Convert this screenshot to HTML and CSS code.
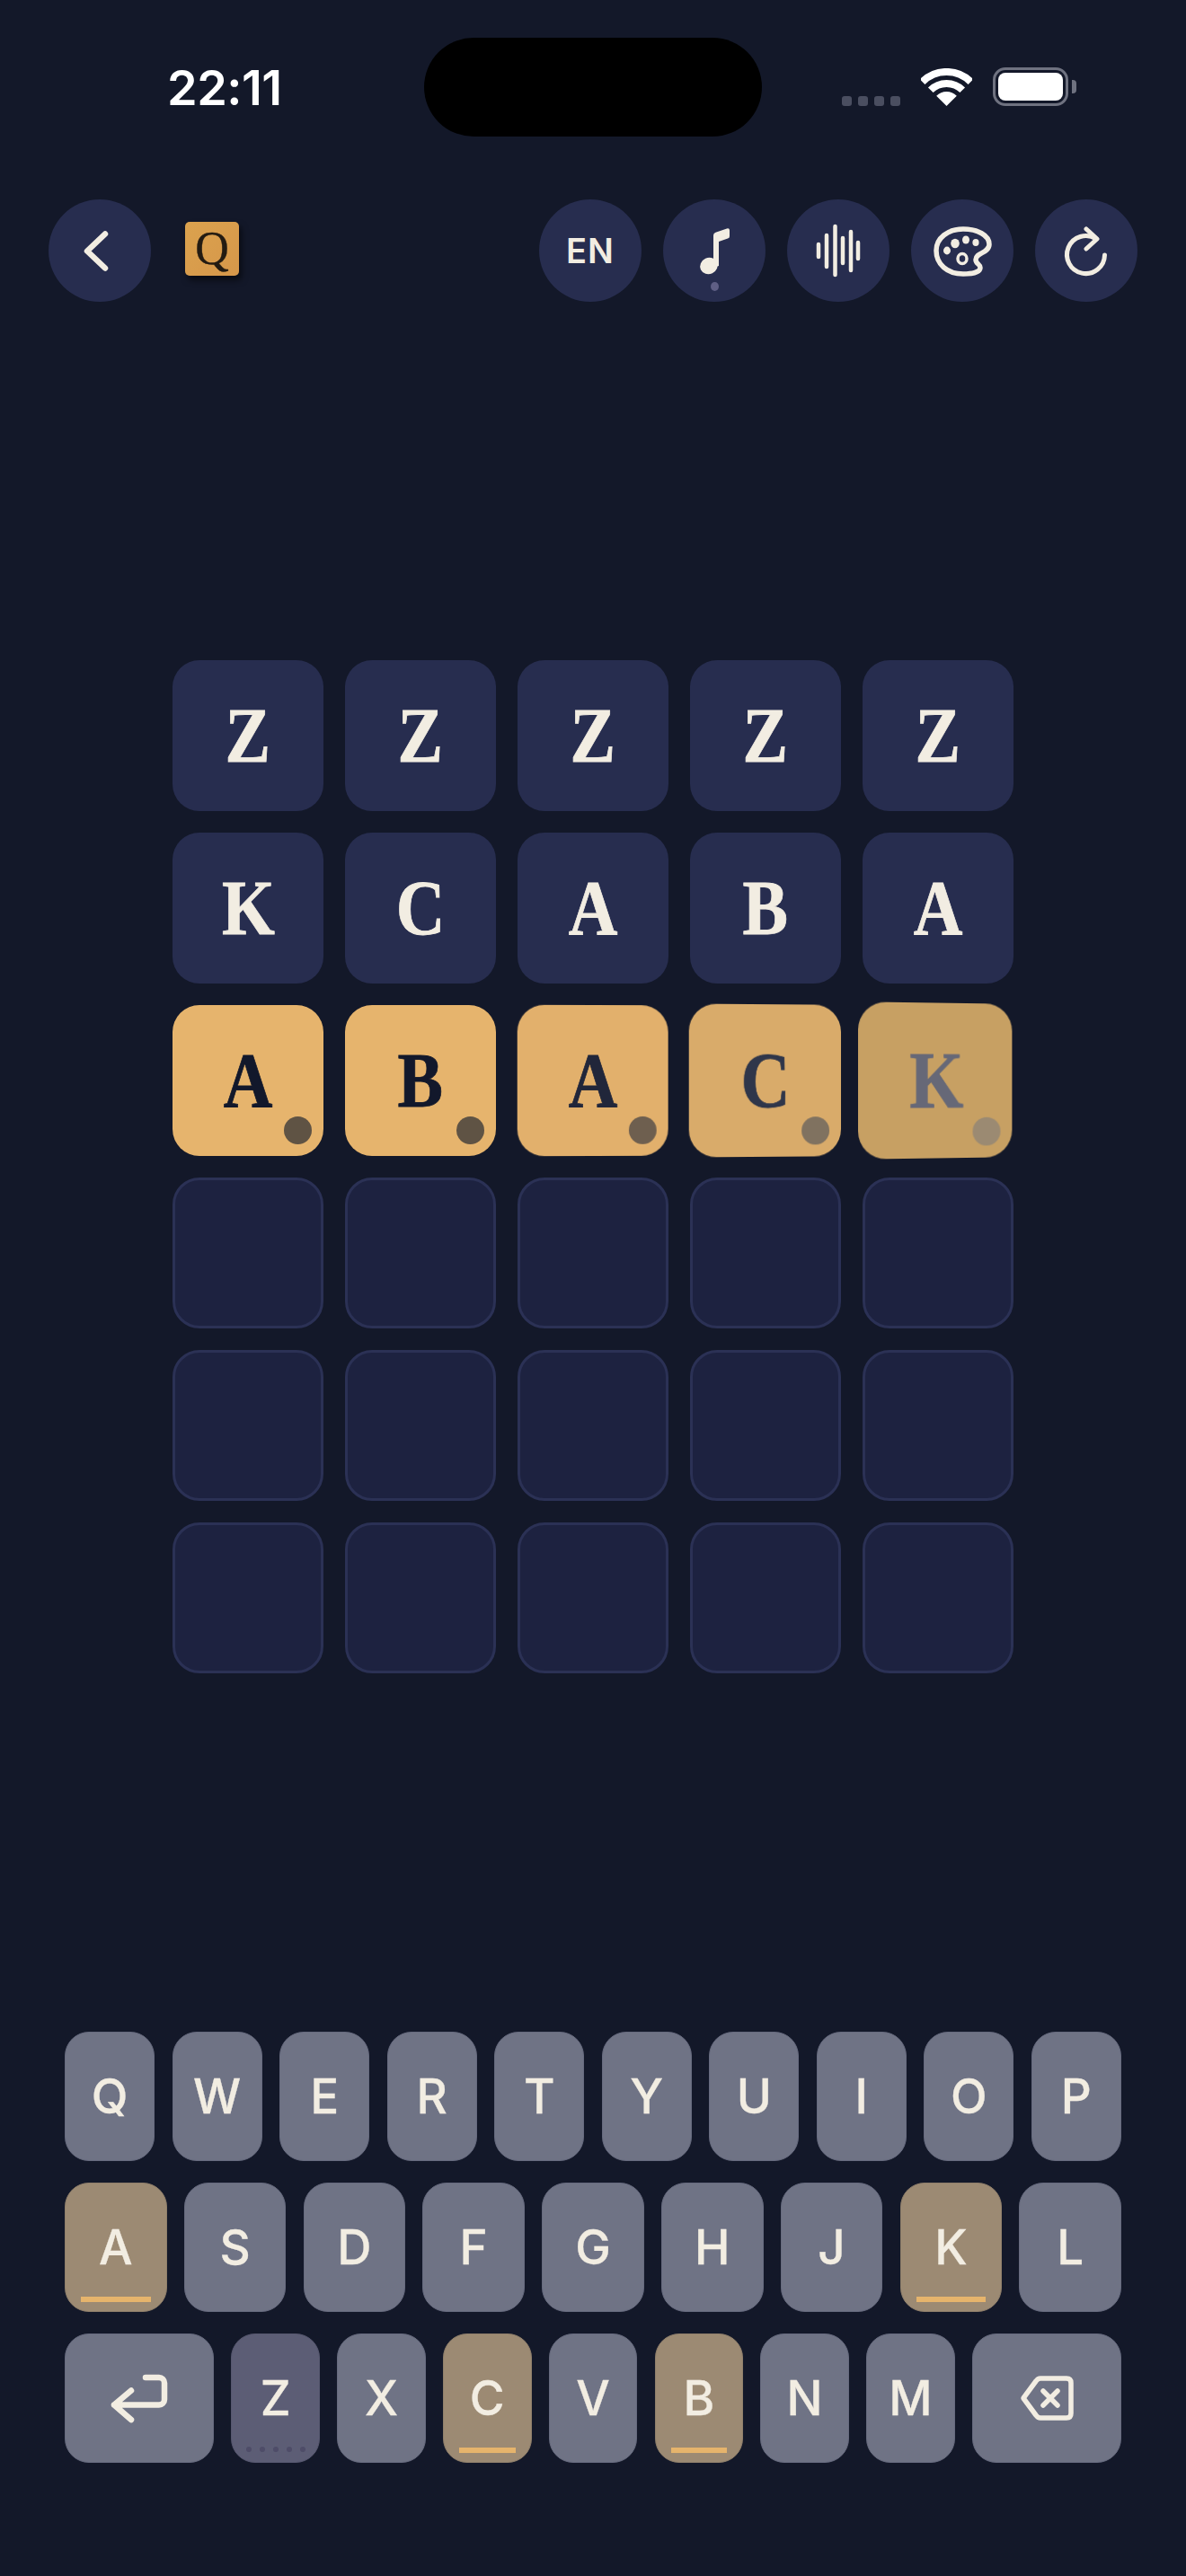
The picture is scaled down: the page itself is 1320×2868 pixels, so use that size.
FILE: index.html
```html
<!DOCTYPE html>
<html lang="en">

<head>
    <meta charset="UTF-8" />
    <meta name="viewport" content="width=device-width, initial-scale=1.0" />
    <title>Word game</title>
    <link rel="stylesheet" href="styles.css">
</head>

<body>
    <div class="status-bar">
        <div class="status-time">22:11</div>
        <div class="island"></div>
        <div class="status-icons">
            <div class="signal"><i></i><i></i><i></i><i></i></div>
            <svg class="wifi" width="57" height="42" viewBox="0 0 57 42">
                <path d="M1.6 15.1A38 38 0 0 1 55.4 15.1M10.8 24.3A25 25 0 0 1 46.2 24.3" fill="none" stroke="#fff" stroke-width="8" />
                <path d="M28.5 42L17.2 30.7A16 16 0 0 1 39.8 30.7Z" fill="#fff" />
            </svg>
            <div class="battery"><div class="battery-fill"></div></div>
            <div class="battery-cap"></div>
        </div>
    </div>

    <div class="toolbar">
        <button class="round-btn">
            <svg width="114" height="114" viewBox="0 0 114 114">
                <path d="M63 38.500L43 57.500L63 76.500" class="icon-line" stroke-width="6.500" />
            </svg>
        </button>
        <div class="mini-tile">Q</div>
        <div class="toolbar-right">
            <button class="round-btn lang-btn">EN</button>
            <button class="round-btn">
                <svg width="114" height="114" viewBox="0 0 114 114">
                    <ellipse cx="51" cy="74" rx="10" ry="9" transform="rotate(-25 51 74)" class="icon-fill" />
                    <path d="M56 76V40q0-2.500 2.500-3.200L71 32.500q3-.8 3 2V41q0 2-2 2.600L62 47V74Z" class="icon-fill" />
                </svg>
                <span class="music-dot"></span>
            </button>
            <button class="round-btn">
                <svg width="114" height="114" viewBox="0 0 114 114">
                    <path d="M35 50V64M44 40V75M53.500 30V84M62 43V71M71 36V79M79 48V66" class="icon-line" stroke-width="4.500" />
                </svg>
            </button>
            <button class="round-btn">
                <svg width="114" height="114" viewBox="0 0 114 114">
                    <path d="M58 33C74 33 87 40 87 50C87 60 72 59 72 67C72 72 77 72 77 76C77 81 68 83 58 83C40 83 28 72 28 57C28 43 41 33 58 33Z" class="icon-line" stroke-width="5.500" />
                    <ellipse cx="49" cy="49" rx="4.800" ry="5.200" class="icon-fill" />
                    <ellipse cx="61" cy="45" rx="4" ry="4.500" class="icon-fill" />
                    <ellipse cx="72" cy="48" rx="3.600" ry="4" class="icon-fill" />
                    <ellipse cx="40" cy="57" rx="4" ry="4.400" class="icon-fill" />
                    <ellipse cx="57" cy="66" rx="5" ry="5.500" class="icon-line" stroke-width="3.500" />
                </svg>
            </button>
            <button class="round-btn">
                <svg width="114" height="114" viewBox="0 0 114 114">
                    <path d="M77.500 62A21 21 0 1 1 68 44" class="icon-line" stroke-width="5" />
                    <path d="M57 33L69 44L57 55" class="icon-line" stroke-width="5" />
                </svg>
            </button>
        </div>
    </div>

    <div class="board">
        <div class="tile tile-used"><span>Z</span></div>
        <div class="tile tile-used"><span>Z</span></div>
        <div class="tile tile-used"><span>Z</span></div>
        <div class="tile tile-used"><span>Z</span></div>
        <div class="tile tile-used"><span>Z</span></div>

        <div class="tile tile-used"><span>K</span></div>
        <div class="tile tile-used"><span>C</span></div>
        <div class="tile tile-used"><span>A</span></div>
        <div class="tile tile-used"><span>B</span></div>
        <div class="tile tile-used"><span>A</span></div>

        <div class="tile tile-gold"><span>A</span><i class="tile-dot"></i></div>
        <div class="tile tile-gold flip-1"><span>B</span><i class="tile-dot"></i></div>
        <div class="tile tile-gold flip-2"><span>A</span><i class="tile-dot"></i></div>
        <div class="tile tile-gold flip-3"><span>C</span><i class="tile-dot"></i></div>
        <div class="tile tile-gold flip-4"><span>K</span><i class="tile-dot"></i></div>

        <div class="tile tile-empty"></div>
        <div class="tile tile-empty"></div>
        <div class="tile tile-empty"></div>
        <div class="tile tile-empty"></div>
        <div class="tile tile-empty"></div>

        <div class="tile tile-empty"></div>
        <div class="tile tile-empty"></div>
        <div class="tile tile-empty"></div>
        <div class="tile tile-empty"></div>
        <div class="tile tile-empty"></div>

        <div class="tile tile-empty"></div>
        <div class="tile tile-empty"></div>
        <div class="tile tile-empty"></div>
        <div class="tile tile-empty"></div>
        <div class="tile tile-empty"></div>
    </div>

    <div class="keyboard">
        <div class="key-row">
            <button class="key">Q</button>
            <button class="key">W</button>
            <button class="key">E</button>
            <button class="key">R</button>
            <button class="key">T</button>
            <button class="key">Y</button>
            <button class="key">U</button>
            <button class="key">I</button>
            <button class="key">O</button>
            <button class="key">P</button>
        </div>
        <div class="key-row">
            <button class="key key-gold">A</button>
            <button class="key">S</button>
            <button class="key">D</button>
            <button class="key">F</button>
            <button class="key">G</button>
            <button class="key">H</button>
            <button class="key">J</button>
            <button class="key key-gold">K</button>
            <button class="key">L</button>
        </div>
        <div class="key-row">
            <button class="key key-wide">
                <svg width="80" height="60" viewBox="0 0 80 60">
                    <path d="M12 37.500H62a6 6 0 0 0 6-6V13a6 6 0 0 0-6-6H47M31 21.500L12 37.500L31 54" class="icon-line" stroke-width="6.500" />
                </svg>
            </button>
            <button class="key key-dim">Z
                <span class="key-dots"><i></i><i></i><i></i><i></i><i></i></span>
            </button>
            <button class="key">X</button>
            <button class="key key-gold">C</button>
            <button class="key">V</button>
            <button class="key key-gold">B</button>
            <button class="key">N</button>
            <button class="key">M</button>
            <button class="key key-wide">
                <svg width="60" height="50" viewBox="0 0 60 50">
                    <path d="M4 25L18 6q2-3 5-3H52q5 0 5 5V42q0 5-5 5H23q-3 0-5-3Z" class="icon-line" stroke-width="5.500" />
                    <path d="M26 17L42 33M42 17L26 33" class="icon-line" stroke-width="5.500" />
                </svg>
            </button>
        </div>
    </div>
</body>

</html>
```

FILE: styles.css
```css
html,
body {
    margin: 0;
    padding: 0;
}

body {
    width: 1320px;
    height: 2868px;
    overflow: hidden;
    background-color: #131829;
    color: #f2ede2;
    font-family: Inter, "Liberation Sans", sans-serif;
}

button {
    margin: 0;
    padding: 0;
    border: none;
    font-family: inherit;
    color: inherit;
}

.icon-line {
    fill: none;
    stroke: #f2ede2;
    stroke-linecap: round;
    stroke-linejoin: round;
}

.icon-fill {
    fill: #f2ede2;
}

/* status bar */
.status-bar {
    display: flex;
    align-items: center;
    height: 110px;
    padding: 42px 0 0 186px;
}

.status-time {
    width: 286px;
    font-size: 54px;
    font-weight: 600;
    letter-spacing: -0.5px;
    color: #fff;
}

.island {
    width: 376px;
    height: 110px;
    border-radius: 55px;
    background-color: #000;
}

.status-icons {
    display: flex;
    align-items: flex-end;
    height: 43px;
    margin-left: 89px;
    margin-top: -1px;
}

.signal {
    display: flex;
    gap: 7px;
    margin-right: 23px;
}

.signal i {
    width: 11px;
    height: 11px;
    border-radius: 3px;
    background-color: #4a4e60;
}

.wifi {
    margin-right: 23px;
}

.battery {
    box-sizing: border-box;
    width: 84px;
    height: 43px;
    padding: 3px;
    border: 3.5px solid #6f7280;
    border-radius: 14px;
}

.battery-fill {
    height: 100%;
    border-radius: 8px;
    background-color: #fff;
}

.battery-cap {
    width: 5px;
    height: 15px;
    margin: 0 0 14px 4px;
    border-radius: 0 4px 4px 0;
    background-color: #6f7280;
}

/* toolbar */
.toolbar {
    display: flex;
    align-items: center;
    height: 114px;
    margin-top: 70px;
    padding: 0 54px;
}

.toolbar-right {
    display: flex;
    gap: 24px;
    margin-left: auto;
}

.round-btn {
    position: relative;
    display: block;
    width: 114px;
    height: 114px;
    border-radius: 50%;
    background-color: #272d4f;
}

.round-btn svg {
    display: block;
}

.lang-btn {
    font-size: 38px;
    font-weight: 600;
    letter-spacing: 1px;
}

.music-dot {
    position: absolute;
    left: 53px;
    top: 92px;
    width: 9px;
    height: 10px;
    border-radius: 50%;
    background-color: #5f5f85;
}

.mini-tile {
    width: 60px;
    height: 60px;
    margin: -5px 0 0 38px;
    border-radius: 5px;
    background: linear-gradient(135deg, #dba24e, #d6974a);
    box-shadow: 3px 5px 7px rgba(0, 0, 0, 0.55);
    color: #231b12;
    font-family: "Liberation Serif", serif;
    font-size: 52px;
    line-height: 60px;
    text-align: center;
    -webkit-text-stroke: 0.4px #231b12;
}

/* board */
.board {
    display: grid;
    grid-template-columns: repeat(5, 168px);
    grid-auto-rows: 168px;
    gap: 24px;
    justify-content: center;
    margin-top: 399px;
}

.tile {
    position: relative;
    box-sizing: border-box;
    display: flex;
    align-items: center;
    justify-content: center;
    border-radius: 30px;
    font-family: "Liberation Serif", serif;
    font-size: 86px;
    font-weight: 700;
    -webkit-text-stroke: 0.8px currentColor;
}

.tile span {
    display: block;
    transform: scaleX(0.88);
}

.tile-used {
    background-color: #272d4f;
}

.tile-empty {
    background-color: #1d2240;
    border: 3px solid #2b3155;
}

.tile-gold {
    background-color: #e6b46d;
    color: #12182b;
}

.tile-dot {
    position: absolute;
    right: 13px;
    bottom: 13px;
    width: 31px;
    height: 31px;
    border-radius: 50%;
    background-color: #5f5344;
}

.flip-2 {
    background-color: #e2b06c;
    color: #21263a;
    transform: perspective(800px) rotateY(2deg);
}

.flip-2 .tile-dot {
    background-color: #6e5f4f;
}

.flip-3 {
    background-color: #d9ab6a;
    color: #2f364a;
    transform: perspective(800px) rotateY(4deg) scale(1.01);
}

.flip-3 .tile-dot {
    background-color: #807260;
}

.flip-4 {
    background-color: #c7a063;
    color: #666877;
    transform: translateX(-2px) perspective(800px) rotateY(8deg) scale(1.03);
}

.flip-4 .tile-dot {
    background-color: #9b8a72;
}

/* keyboard */
.keyboard {
    display: flex;
    flex-direction: column;
    gap: 24px;
    margin: 399px 72px 0;
}

.key-row {
    display: flex;
    gap: 19.2px;
    height: 144px;
}

.key {
    position: relative;
    flex: 1 1 0;
    display: flex;
    align-items: center;
    justify-content: center;
    box-sizing: border-box;
    border: 1.5px solid #666a7e;
    border-radius: 27px;
    background-color: #6f7385;
    font-size: 53px;
    font-weight: 500;
    -webkit-text-stroke: 0.3px currentColor;
}

.key-wide {
    flex-grow: 1.7;
}

.key-dim {
    background-color: #5c5d75;
    border-color: #56576f;
}

.key-gold {
    background-color: #9c8a73;
    border-color: #8f7f6b;
}

.key-gold::after {
    content: "";
    position: absolute;
    left: 17px;
    right: 17px;
    bottom: 10px;
    height: 6px;
    background-color: #e6b46c;
}

.key-dots {
    position: absolute;
    left: 0;
    right: 0;
    bottom: 11px;
    display: flex;
    justify-content: center;
    gap: 9px;
}

.key-dots i {
    width: 6px;
    height: 6px;
    border-radius: 50%;
    background-color: #4e4c68;
}
```
